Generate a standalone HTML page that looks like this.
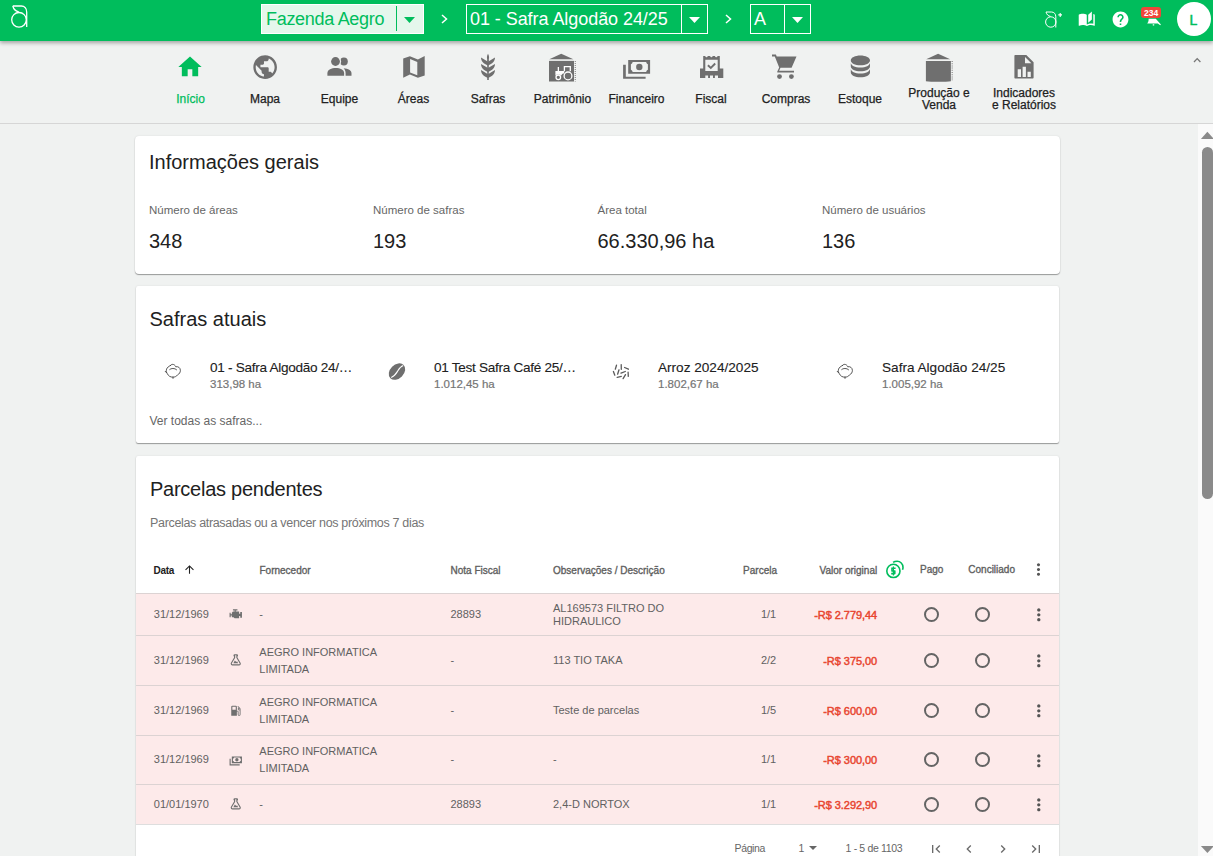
<!DOCTYPE html>
<html><head><meta charset="utf-8">
<style>
*{box-sizing:border-box}
html,body{margin:0;padding:0}
body{width:1213px;height:856px;overflow:hidden;position:relative;background:#f0f2f1;font-family:"Liberation Sans",sans-serif;color:#212121}
.a{position:absolute;white-space:nowrap;line-height:1}
svg{position:absolute;display:block}
#top{position:absolute;left:0;top:0;width:1213px;height:41px;background:#00bd5c;box-shadow:0 2px 4px rgba(0,0,0,.32);z-index:3}
#nav{position:absolute;left:0;top:41px;width:1213px;height:83px;background:#f0f2f1;border-bottom:1px solid #d6d6d6;z-index:2}
.sel{position:absolute;top:4px;height:30px;border:1px solid #fff}
.sel .sep{position:absolute;top:0;bottom:0;width:1px;background:#fff}
.nl{position:absolute;font-size:12px;-webkit-text-stroke:.25px currentColor;color:#212121;text-align:center;line-height:12.5px;white-space:nowrap;transform:translateX(-50%)}
.card{position:absolute;background:#fff;border-radius:4px;box-shadow:0 1px 1px rgba(0,0,0,.35),0 0 2px rgba(0,0,0,.1)}
.th{font-size:10px;color:#5f5f5f;-webkit-text-stroke:.35px #5f5f5f}
.td{font-size:11px;color:#616161}
.tv{font-size:11px;letter-spacing:-.05px;color:#e8452f;-webkit-text-stroke:.45px #e8452f}
.row{position:absolute;left:136px;width:923px;background:#fdeaea;border-top:1px solid #dcd3d3}
.rad{position:absolute;width:15px;height:15px;margin:-.5px 0 0 -.5px;border:2px solid #646464;border-radius:50%}
.pg{font-size:10.5px;color:#666}
</style></head><body>

<div id="top">
  <!-- logo -->
  <svg style="left:0;top:0" width="40" height="40" viewBox="0 0 40 40">
    <path d="M12.8 6 H21.3 C24.6 6 26.7 8.6 26.7 12.2 V26.9" fill="none" stroke="#fff" stroke-width="1.3"/>
    <path d="M12.8 6 C13.6 9.2 15.4 11.2 18.8 11.9" fill="none" stroke="#fff" stroke-width="1.3"/>
    <circle cx="19" cy="19.8" r="7.3" fill="none" stroke="#fff" stroke-width="1.3"/>
  </svg>

  <div class="sel" style="left:261px;width:163px;background:#e5f7ec">
    <div class="a" id="t_faz" style="left:4px;top:5px;font-size:18px;letter-spacing:-.3px;color:#00bd5c">Fazenda Aegro</div>
    <div class="sep" style="left:134px;background:#00bd5c;top:1px;bottom:2px"></div>
    <svg style="left:142px;top:12px" width="11" height="6" viewBox="0 0 11 6"><path d="M0 0H11L5.5 6z" fill="#00bd5c"/></svg>
  </div>
  <svg style="left:441px;top:14px" width="7" height="10" viewBox="0 0 7 10"><path d="M1 1L5.5 5L1 9" fill="none" stroke="#fff" stroke-width="1.5"/></svg>

  <div class="sel" style="left:466px;width:242px">
    <div class="a" id="t_safra" style="left:3px;top:5px;font-size:18px;letter-spacing:-.06px;color:#fff">01 - Safra Algodão 24/25</div>
    <div class="sep" style="left:214px"></div>
    <svg style="left:222px;top:12px" width="11" height="6" viewBox="0 0 11 6"><path d="M0 0H11L5.5 6z" fill="#fff"/></svg>
  </div>
  <svg style="left:725px;top:14px" width="7" height="10" viewBox="0 0 7 10"><path d="M1 1L5.5 5L1 9" fill="none" stroke="#fff" stroke-width="1.5"/></svg>

  <div class="sel" style="left:750px;width:61px">
    <div class="a" id="t_a" style="left:3px;top:5px;font-size:18px;color:#fff">A</div>
    <div class="sep" style="left:33px"></div>
    <svg style="left:41px;top:12px" width="11" height="6" viewBox="0 0 11 6"><path d="M0 0H11L5.5 6z" fill="#fff"/></svg>
  </div>

  <!-- right icons -->
  <svg style="left:1044px;top:10px" width="20" height="19" viewBox="0 0 20 19">
    <path d="M2 2 H7.5 C10 2 11.8 3.8 11.8 6.8 V17.5" fill="none" stroke="#fff" stroke-width="1"/>
    <path d="M2 2 C2.7 4.6 4.2 6 6.6 6.4" fill="none" stroke="#fff" stroke-width="1"/>
    <circle cx="6.8" cy="12" r="5.2" fill="none" stroke="#fff" stroke-width="1"/>
    <path d="M14.3 4.9H18M16.2 2.9V6.9" stroke="#fff" stroke-width="1.1"/>
  </svg>
  <svg style="left:1078.3px;top:10.4px" width="17.5" height="17.5" viewBox="0 0 24 24"><path fill="#fff" d="M19 2L14 6.5V17.5L19 13V2M6.5 5C4.55 5 2.45 5.4 1 6.5V21.16C1 21.41 1.25 21.66 1.5 21.66C1.6 21.66 1.65 21.59 1.75 21.59C3.1 20.94 5.05 20.5 6.5 20.5C8.45 20.5 10.550 20.9 12 22C13.35 21.15 15.8 20.5 17.5 20.5C19.15 20.5 20.85 20.81 22.25 21.56C22.35 21.61 22.4 21.59 22.5 21.59C22.75 21.59 23 21.34 23 21.09V6.5C22.4 6.05 21.75 5.75 21 5.5V19C19.9 18.65 18.7 18.5 17.5 18.5C15.8 18.5 13.35 19.15 12 20V6.5C10.55 5.4 8.450 5 6.5 5Z"/></svg>
  <svg style="left:1111px;top:10px" width="19" height="19" viewBox="0 0 24 24"><path fill="#fff" d="M12 2C6.48 2 2 6.48 2 12s4.48 10 10 10 10-4.48 10-10S17.52 2 12 2zm1 17h-2v-2h2v2zm2.07-7.750l-.9.92C13.45 12.9 13 13.5 13 15h-2v-.5c0-1.1.45-2.1 1.17-2.83l1.24-1.26c.37-.36.59-.86.59-1.41 0-1.1-.9-2-2-2s-2 .9-2 2H8c0-2.21 1.79-4 4-4s4 1.79 4 4c0 .88-.36 1.68-.93 2.25z"/></svg>
  <svg style="left:1136px;top:2px" width="32" height="30" viewBox="0 0 32 30"><path fill="#fff" d="M12.6 16.8H19.8L24.9 22.5L24.2 23.2L21.8 21.4H11.2C11.9 20.6 12.5 19.5 12.6 18Z"/><circle cx="17.5" cy="22.8" r=".9" fill="#fff" opacity=".8"/></svg>
  <div style="position:absolute;left:1141.3px;top:7.3px;width:19.6px;height:11.2px;background:#ef463a;border-radius:3px"></div>
  <div class="a" style="left:1141.3px;top:8.7px;width:19.6px;text-align:center;font-size:8.5px;font-weight:bold;color:#fff">234</div>
  <div style="position:absolute;left:1177px;top:2px;width:34px;height:34px;border-radius:50%;background:#fff"></div>
  <div class="a" style="left:1176.5px;top:12.5px;width:34px;text-align:center;font-size:14px;color:#00bd5c;-webkit-text-stroke:.5px #00bd5c">L</div>
</div>

<div id="nav"></div>
<div id="navitems" style="position:absolute;left:0;top:0;z-index:4">
  <svg style="left:176.4px;top:52.6px" width="28" height="28" viewBox="0 0 24 24"><path fill="#00bd5c" d="M10 20v-6h4v6h5v-8h3L12 3 2 12h3v8z"/></svg>
  <svg style="left:250.8px;top:52.5px" width="28.3" height="28.3" viewBox="0 0 24 24"><path fill="#6f6f6f" d="M12 2C6.48 2 2 6.480 2 12s4.48 10 10 10 10-4.48 10-10S17.52 2 12 2zm-1 17.93c-3.95-.49-7-3.85-7-7.93 0-.62.08-1.21.21-1.79L9 15v1c0 1.1.9 2 2 2v1.93zm6.9-2.54c-.26-.81-1-1.39-1.9-1.39h-1v-3c0-.55-.45-1-1-1H8v-2h2c.55 0 1-.45 1-1V7h2c1.1 0 2-.9 2-2v-.41c2.93 1.19 5 4.06 5 7.41 0 2.08-.8 3.970-2.1 5.39z"/></svg>
  <svg style="left:320px;top:50px" width="38" height="35" viewBox="0 0 38 35">
    <circle cx="23.9" cy="11.5" r="3.9" fill="#6f6f6f"/>
    <circle cx="15.5" cy="11.5" r="5.6" fill="#f0f2f1"/>
    <circle cx="15.5" cy="11.5" r="4.4" fill="#6f6f6f"/>
    <path fill="#6f6f6f" d="M7.4 25.8V23.2C7.4 19.6 11.5 18 15.75 18S24.1 19.6 24.1 23.2V25.8Z"/>
    <path fill="#6f6f6f" d="M25.6 25.8V23.2C25.6 21.2 24.9 19.5 23.6 18.3C28.2 18.6 31.5 20.3 31.5 23.2V25.8Z"/>
  </svg>
  <svg style="left:395px;top:50px" width="40" height="35" viewBox="0 0 40 35">
    <path fill="#6f6f6f" fill-rule="evenodd" d="M8.2 8.6L14.9 6.3L22.9 9.5L29.7 6.1V25.4L22.9 27.8L14.9 24.5L8.2 27.8Z M15.1 9.1L22.3 11.9V25.2L15.1 22.6Z"/>
  </svg>
  <svg style="left:470px;top:50px" width="35" height="35" viewBox="0 0 35 35">
    <g fill="#6f6f6f">
    <path d="M18 3.8C19.3 5.8 19.6 8.6 18 11.8C16.4 8.6 16.7 5.8 18 3.8Z"/>
    <rect x="17.2" y="10" width="1.6" height="20"/>
    <path d="M11 7.6L18 11.8L25 7.6C25 11.2 22.4 13.8 18 15.6C13.6 13.8 11 11.2 11 7.6Z"/>
    <path d="M11 13.9L18 18.1L25 13.9C25 17.5 22.4 20.1 18 21.9C13.6 20.1 11 17.5 11 13.9Z"/>
    <path d="M11 20.1L18 24.3L25 20.1C25 23.7 22.4 26.3 18 28.1C13.6 26.3 11 23.7 11 20.1Z"/>
    </g>
  </svg>
  <svg style="left:544px;top:50px" width="40" height="36" viewBox="0 0 40 36">
    <path fill="#6f6f6f" d="M17.2 3.8L29.4 9.3H5.3Z"/>
    <rect x="5" y="10.9" width="25" height="20.6" fill="#6f6f6f"/>
    <path d="M31.3 11V31.5" stroke="#8d8d8d" stroke-width="1.2" stroke-dasharray="1 1"/>
    <g fill="none" stroke="#fff" stroke-width="1.3">
      <circle cx="24" cy="25.9" r="3.9"/>
      <circle cx="14.3" cy="27.3" r="2.3"/>
      <path d="M20.4 21.3V16.6H26.3V21.3"/>
    </g>
    <path fill="#fff" d="M11.4 21H20.2V23.5H19C18.4 24 17.8 24.5 17.2 25.6C16.6 25 15.6 24.6 14.3 24.6C13 24.6 12 25.1 11.4 25.6Z"/>
    <rect x="13.7" y="17" width="1.3" height="4.2" fill="#fff"/>
  </svg>
  <svg style="left:617px;top:50px" width="40" height="35" viewBox="0 0 40 35">
    <path fill="#6f6f6f" fill-rule="evenodd" d="M11.2 10H33.1V23.7H11.2Z M15.6 12.1H29.2C29.4 13.4 30.3 14.2 30.9 14.3V19.7C30.3 19.8 29.4 20.6 29.2 21.9H15.6C15.4 20.6 14.5 19.8 13.9 19.7V14.3C14.5 14.2 15.4 13.4 15.6 12.1Z"/>
    <circle cx="22.3" cy="17" r="3.2" fill="#6f6f6f"/>
    <path fill="#6f6f6f" d="M6.1 14.8H8.8V26.8H28.6V28.8H6.1Z"/>
  </svg>
  <svg style="left:693px;top:50px" width="38" height="35" viewBox="0 0 38 35">
    <path fill="#6f6f6f" fill-rule="evenodd" d="M10.2 6.1H12.3A1.2 1.2 0 0 0 14.7 6.1H17.2A1.2 1.2 0 0 0 19.6 6.1H22A1.2 1.2 0 0 0 24.5 6.1H26.8V18.6H30.3V28H25V25.6H21.9V28H20V25.6H17V28H15.1V25.6H12.3V28H7V18.6H10.2Z M12.3 9.8V21.1H24.7V9.8Z"/>
    <path d="M14.9 15.2L17.8 17.9L22.2 13.5" fill="none" stroke="#6f6f6f" stroke-width="1.9"/>
  </svg>
  <svg style="left:766px;top:50px" width="36" height="35" viewBox="0 0 36 35">
    <path fill="#6f6f6f" d="M6 4.6H9.9L10.7 6.6H30.5L25.6 17.8H14.5L13.1 20.7H28V22.6H12C11.3 22.6 11 22 11.3 21.4L13.2 17.6L8.8 6.6H6Z"/>
    <circle cx="13.5" cy="26.6" r="2.4" fill="#6f6f6f"/>
    <circle cx="25.4" cy="26.6" r="2.4" fill="#6f6f6f"/>
  </svg>
  <svg style="left:845.6px;top:52.3px" width="28.8" height="28.8" viewBox="0 0 24 24"><path fill="#6f6f6f" d="M12,3C7.58,3 4,4.79 4,7C4,9.21 7.58,11 12,11C16.42,11 20,9.21 20,7C20,4.79 16.42,3 12,3M4,9V12C4,14.21 7.58,16 12,16C16.42,16 20,14.21 20,12V9C20,11.21 16.42,13 12,13C7.58,13 4,11.21 4,9M4,14V17C4,19.21 7.58,21 12,21C16.42,21 20,19.21 20,17V14C20,16.21 16.42,18 12,18C7.58,18 4,16.21 4,14Z"/></svg>
  <svg style="left:918px;top:48px" width="44" height="40" viewBox="0 0 44 40">
    <path fill="#6f6f6f" d="M20.1 5.8L32.2 11.2H8.2Z"/>
    <path fill="#6f6f6f" d="M7.9 12.9H32.9V33.2C28 34 12.8 34 7.9 33.2Z"/>
    <path d="M34.2 13V33" stroke="#8d8d8d" stroke-width="1.3" stroke-dasharray="1 1.2"/>
  </svg>
  <svg style="left:1005px;top:50px" width="38" height="35" viewBox="0 0 38 35">
    <path fill="#6f6f6f" fill-rule="evenodd" d="M10.4 5.1H21.3L28.6 12.3V27.6C28.6 28.2 28.2 28.6 27.6 28.6H10.4C9.8 28.6 9.4 28.2 9.4 27.6V6.1C9.4 5.5 9.8 5.1 10.4 5.1Z M20 7V13.3H26.4Z M12.7 19.2V27H16V19.2Z M17.6 16.8V27H20.9V16.8Z M22.5 21.7V27H25.8V21.7Z"/>
  </svg>
  <svg style="left:1190px;top:55px" width="14" height="10" viewBox="0 0 14 10"><path d="M4 7L7.2 3.6L10.4 7" fill="none" stroke="#777" stroke-width="1.3"/></svg>

  <div class="nl" id="n1" style="left:190.5px;top:92.8px;color:#00bd5c">Início</div>
  <div class="nl" id="n2" style="left:265px;top:92.8px">Mapa</div>
  <div class="nl" id="n3" style="left:339.5px;top:92.8px">Equipe</div>
  <div class="nl" id="n4" style="left:413.5px;top:92.8px">Áreas</div>
  <div class="nl" id="n5" style="left:488px;top:92.8px">Safras</div>
  <div class="nl" id="n6" style="left:562.5px;top:92.8px">Patrimônio</div>
  <div class="nl" id="n7" style="left:636.5px;top:92.8px">Financeiro</div>
  <div class="nl" id="n8" style="left:711px;top:92.8px">Fiscal</div>
  <div class="nl" id="n9" style="left:786px;top:92.8px">Compras</div>
  <div class="nl" id="n10" style="left:860px;top:92.8px">Estoque</div>
  <div class="nl" id="n11" style="left:939px;top:86.6px">Produção e<br>Venda</div>
  <div class="nl" id="n12" style="left:1024px;top:86.6px">Indicadores<br>e Relatórios</div>
</div>

<!--CARDS-->
<div class="card" style="left:135px;top:136px;width:925px;height:138px"></div>
<div class="a" id="c1t" style="left:149px;top:152.1px;font-size:20px;color:#212121">Informações gerais</div>
<div class="a" id="c1l0" style="left:149px;top:205.1px;font-size:11.5px;color:#666">Número de áreas</div>
<div class="a" id="c1v0" style="left:149px;top:231.1px;font-size:20px;color:#212121">348</div>
<div class="a" id="c1l1" style="left:373px;top:205.1px;font-size:11.5px;color:#666">Número de safras</div>
<div class="a" id="c1v1" style="left:373px;top:231.1px;font-size:20px;color:#212121">193</div>
<div class="a" id="c1l2" style="left:597.5px;top:205.1px;font-size:11.5px;color:#666">Área total</div>
<div class="a" id="c1v2" style="left:597.5px;top:231.1px;font-size:20px;color:#212121">66.330,96 ha</div>
<div class="a" id="c1l3" style="left:822px;top:205.1px;font-size:11.5px;color:#666">Número de usuários</div>
<div class="a" id="c1v3" style="left:822px;top:231.1px;font-size:20px;color:#212121">136</div>
<div class="card" style="left:136px;top:286px;width:923px;height:157px;border-radius:2px"></div>
<div class="a" id="c2t" style="left:149.5px;top:308.7px;font-size:20px;color:#212121">Safras atuais</div>
<div class="a" id="c2n0" style="left:210px;top:360.5px;font-size:13.6px;color:#212121;-webkit-text-stroke:.1px #212121;letter-spacing:-.3px">01 - Safra Algodão 24/…</div>
<div class="a" id="c2a0" style="left:210px;top:378.7px;font-size:11.5px;color:#757575;-webkit-text-stroke:.2px #757575">313,98 ha</div>
<svg style="left:160px;top:358px" width="26" height="26" viewBox="0 0 26 26"><g fill="none" stroke="#3a3a3a" stroke-width=".85" stroke-linecap="round"><path d="M10.3 7.6C11 5.9 14.4 5.5 15.8 8.8C18 8.2 20.3 9.6 20.4 12.4C20.4 14.4 19.3 16 17.6 16.8C16.5 18.5 14.6 19.2 13 19.1C10.5 19.3 8.4 18 7.4 15.8C6.4 14.6 6 12.6 6.6 11.1C7.1 9.5 8.7 8.4 10.3 7.6Z"/><path d="M13 19.1V20.4M9.7 11.5C11 10.2 14.8 9.9 16.6 11.8M5.2 13.3L6.5 14.7"/></g></svg>
<div class="a" id="c2n1" style="left:434px;top:360.5px;font-size:13.6px;color:#212121;-webkit-text-stroke:.1px #212121;letter-spacing:-.3px">01 Test Safra Café 25/…</div>
<div class="a" id="c2a1" style="left:434px;top:378.7px;font-size:11.5px;color:#757575;-webkit-text-stroke:.2px #757575">1.012,45 ha</div>
<svg style="left:384px;top:358px" width="26" height="26" viewBox="0 0 26 26"><ellipse cx="13" cy="13.6" rx="9.4" ry="6.9" transform="rotate(-45 13 13.6)" fill="#6f6f6f"/><path d="M19.2 7.6C16.2 8.6 14.8 11.2 13.5 13.4C12.2 15.6 10.4 18.2 7.2 19.4" fill="none" stroke="#fff" stroke-width="1.1"/></svg>
<div class="a" id="c2n2" style="left:658px;top:360.5px;font-size:13.6px;color:#212121;-webkit-text-stroke:.1px #212121;">Arroz 2024/2025</div>
<div class="a" id="c2a2" style="left:658px;top:378.7px;font-size:11.5px;color:#757575;-webkit-text-stroke:.2px #757575">1.802,67 ha</div>
<svg style="left:608px;top:358px" width="26" height="26" viewBox="0 0 26 26"><g fill="none" stroke="#5a5a5a" stroke-width="1.3" stroke-linecap="round"><path d="M8.5 7.2L7.3 11.2M13.2 6.6L13.3 11.3M16.6 9.5L20.4 11.2M11 11.8L9.6 16.2M5.4 13.5L6.8 17.2M13 15.2L17.3 13.5M20.1 14.2L20.3 18.4M9.2 19.3L13.3 18.4M15.1 20.6L17.5 16.6"/></g></svg>
<div class="a" id="c2n3" style="left:882px;top:360.5px;font-size:13.6px;color:#212121;-webkit-text-stroke:.1px #212121;">Safra Algodão 24/25</div>
<div class="a" id="c2a3" style="left:882px;top:378.7px;font-size:11.5px;color:#757575;-webkit-text-stroke:.2px #757575">1.005,92 ha</div>
<svg style="left:832px;top:358px" width="26" height="26" viewBox="0 0 26 26"><g fill="none" stroke="#3a3a3a" stroke-width=".85" stroke-linecap="round"><path d="M10.3 7.6C11 5.9 14.4 5.5 15.8 8.8C18 8.2 20.3 9.6 20.4 12.4C20.4 14.4 19.3 16 17.6 16.8C16.5 18.5 14.6 19.2 13 19.1C10.5 19.3 8.4 18 7.4 15.8C6.4 14.6 6 12.6 6.6 11.1C7.1 9.5 8.7 8.4 10.3 7.6Z"/><path d="M13 19.1V20.4M9.7 11.5C11 10.2 14.8 9.9 16.6 11.8M5.2 13.3L6.5 14.7"/></g></svg>
<div class="a" id="c2v" style="left:149.5px;top:414.6px;font-size:12px;color:#666">Ver todas as safras...</div>
<div class="card" style="left:136px;top:456px;width:923px;height:430px;border-radius:2px"></div>
<div class="a" id="c3t" style="left:150px;top:479.1px;font-size:20px;letter-spacing:-.25px;color:#212121">Parcelas pendentes</div>
<div class="a" id="c3s" style="left:150px;top:516.8px;font-size:12.5px;letter-spacing:-.33px;color:#757575">Parcelas atrasadas ou a vencer nos próximos 7 dias</div>
<div class="a th" id="h_data" style="left:153.6px;top:565.5px;font-weight:bold;font-size:10px;letter-spacing:-.3px;color:#212121;-webkit-text-stroke:0">Data</div>
<svg style="left:183px;top:563px" width="13" height="13" viewBox="0 0 24 24"><path fill="#212121" d="M4 12l1.41 1.41L11 7.83V20h2V7.83l5.58 5.59L20 12l-8-8-8 8z"/></svg>
<div class="a th" id="h_forn" style="left:259.5px;top:565.5px;">Fornecedor</div>
<div class="a th" id="h_nf" style="left:450.5px;top:565.5px;">Nota Fiscal</div>
<div class="a th" id="h_obs" style="left:553px;top:565.5px;">Observações / Descrição</div>
<div class="a th" id="h_parc" style="left:577px;width:200px;text-align:right;top:565.5px;">Parcela</div>
<div class="a th" id="h_val" style="left:677.2px;width:200px;text-align:right;top:565.5px;">Valor original</div>
<svg style="left:880px;top:555px" width="30" height="28" viewBox="0 0 30 28"><g fill="none" stroke="#00bd5c" stroke-width="1.6"><circle cx="13.4" cy="15.9" r="6.6"/><path d="M13.1 7.4C14.2 6.6 15.7 6.3 17.2 6.3C20.3 6.3 23 8.9 23 12.2C23 13.2 22.8 14 22.5 14.7"/></g><path fill="#00bd5c" d="M11.2 12.5H15.6V14.1H12.8V15.2H14.7C15.4 15.2 15.6 15.6 15.6 16.2V18.6C15.6 19.1 15.3 19.4 14.8 19.4H11.2V17.8H14V16.8H12C11.4 16.8 11.2 16.4 11.2 15.8Z"/><rect x="12.8" y="11.5" width="1.2" height="9" fill="#00bd5c"/></svg>
<div class="a th" id="h_pago" style="left:920px;top:564.5px">Pago</div>
<div class="a th" id="h_conc" style="left:968.3px;top:564.5px">Conciliado</div>
<svg style="left:1029px;top:560px" width="19" height="19" viewBox="0 0 24 24"><path fill="#555" d="M12 8c1.1 0 2-.9 2-2s-.9-2-2-2-2 .9-2 2 .9 2 2 2zm0 2c-1.1 0-2 .9-2 2s.9 2 2 2 2-.9 2-2-.9-2-2-2zm0 6c-1.1 0-2 .9-2 2s.9 2 2 2 2-.9 2-2-.9-2-2-2z"/></svg>
<div class="row" style="top:593px;height:42px"></div>
<div class="a td" style="left:153.8px;top:608.7px">31/12/1969</div>
<svg style="left:228.7px;top:607.0px" width="13.5" height="13.5" viewBox="0 0 24 24"><path fill="#6f6f6f" d="M7,4V6H10V8H7L5,10V13H3V10H1V18H3V15H5V18H8L10,20H18V16H20V19H23V9H20V12H18V8H12V6H15V4H7Z"/></svg>
<div class="a td" style="left:259.3px;top:608.7px">-</div>
<div class="a td" style="left:450.5px;top:608.7px">28893</div>
<div class="a td" style="left:553px;top:603.1px">AL169573 FILTRO DO</div>
<div class="a td" style="left:553px;top:615.9px">HIDRAULICO</div>
<div class="a td" style="left:576.2px;width:200px;text-align:right;top:608.7px">1/1</div>
<div class="a tv" style="left:677.2px;width:200px;text-align:right;top:609.9px">-R$ 2.779,44</div>
<div class="rad" style="left:924.5px;top:607.0px"></div>
<div class="rad" style="left:975.5px;top:607.0px"></div>
<svg style="left:1028.6px;top:605.0px" width="19.6" height="19.6" viewBox="0 0 24 24"><path fill="#555" d="M12 8c1.1 0 2-.9 2-2s-.9-2-2-2-2 .9-2 2 .9 2 2 2zm0 2c-1.1 0-2 .9-2 2s.9 2 2 2 2-.9 2-2-.9-2-2-2zm0 6c-1.1 0-2 .9-2 2s.9 2 2 2 2-.9 2-2-.9-2-2-2z"/></svg>
<div class="row" style="top:635px;height:50px"></div>
<div class="a td" style="left:153.8px;top:654.7px">31/12/1969</div>
<svg style="left:228.7px;top:653.0px" width="13.5" height="13.5" viewBox="0 0 24 24"><path fill="#6f6f6f" d="M5,19A1,1 0 0,0 6,20H18A1,1 0 0,0 19,19C19,18.79 18.93,18.59 18.82,18.43L13,8.35V4H11V8.35L5.18,18.43C5.07,18.59 5,18.79 5,19M6,22A3,3 0 0,1 3,19C3,18.4 3.18,17.84 3.5,17.37L9,7.81V6A1,1 0 0,1 8,5V4A2,2 0 0,1 10,2H14A2,2 0 0,1 16,4V5A1,1 0 0,1 15,6V7.81L20.5,17.37C20.82,17.84 21,18.4 21,19A3,3 0 0,1 18,22H6M13,16L14.34,14.66L16.27,18H7.73L10.39,13.39L13,16Z"/></svg>
<div class="a td" style="left:259.3px;top:646.8px">AEGRO INFORMATICA</div>
<div class="a td" style="left:259.3px;top:663.6px">LIMITADA</div>
<div class="a td" style="left:450.5px;top:654.7px">-</div>
<div class="a td" style="left:553px;top:654.7px">113 TIO TAKA</div>
<div class="a td" style="left:576.2px;width:200px;text-align:right;top:654.7px">2/2</div>
<div class="a tv" style="left:677.2px;width:200px;text-align:right;top:655.9px">-R$ 375,00</div>
<div class="rad" style="left:924.5px;top:653.0px"></div>
<div class="rad" style="left:975.5px;top:653.0px"></div>
<svg style="left:1028.6px;top:651.0px" width="19.6" height="19.6" viewBox="0 0 24 24"><path fill="#555" d="M12 8c1.1 0 2-.9 2-2s-.9-2-2-2-2 .9-2 2 .9 2 2 2zm0 2c-1.1 0-2 .9-2 2s.9 2 2 2 2-.9 2-2-.9-2-2-2zm0 6c-1.1 0-2 .9-2 2s.9 2 2 2 2-.9 2-2-.9-2-2-2z"/></svg>
<div class="row" style="top:685px;height:50px"></div>
<div class="a td" style="left:153.8px;top:704.7px">31/12/1969</div>
<svg style="left:228.7px;top:704.0px" width="13.5" height="13.5" viewBox="0 0 24 24"><path fill="#6f6f6f" d="M18,10A1,1 0 0,1 17,9A1,1 0 0,1 18,8A1,1 0 0,1 19,9A1,1 0 0,1 18,10M12,10H6V5H12M19.77,7.23L19.78,7.22L16.06,3.5L15,4.56L17.11,6.67C16.17,7.03 15.5,7.93 15.5,9A2.5,2.5 0 0,0 18,11.5C18.36,11.5 18.69,11.42 19,11.29V18.5A1,1 0 0,1 18,19.5A1,1 0 0,1 17,18.5V14A2,2 0 0,0 15,12H14V5A2,2 0 0,0 12,3H6A2,2 0 0,0 4,5V21H14V13.5H15.5V18.5A2.5,2.5 0 0,0 18,21A2.5,2.5 0 0,0 20.5,18.5V9C20.5,8.31 20.22,7.68 19.77,7.23Z"/></svg>
<div class="a td" style="left:259.3px;top:696.8px">AEGRO INFORMATICA</div>
<div class="a td" style="left:259.3px;top:713.6px">LIMITADA</div>
<div class="a td" style="left:450.5px;top:704.7px">-</div>
<div class="a td" style="left:553px;top:704.7px">Teste de parcelas</div>
<div class="a td" style="left:576.2px;width:200px;text-align:right;top:704.7px">1/5</div>
<div class="a tv" style="left:677.2px;width:200px;text-align:right;top:705.9px">-R$ 600,00</div>
<div class="rad" style="left:924.5px;top:703.0px"></div>
<div class="rad" style="left:975.5px;top:703.0px"></div>
<svg style="left:1028.6px;top:701.0px" width="19.6" height="19.6" viewBox="0 0 24 24"><path fill="#555" d="M12 8c1.1 0 2-.9 2-2s-.9-2-2-2-2 .9-2 2 .9 2 2 2zm0 2c-1.1 0-2 .9-2 2s.9 2 2 2 2-.9 2-2-.9-2-2-2zm0 6c-1.1 0-2 .9-2 2s.9 2 2 2 2-.9 2-2-.9-2-2-2z"/></svg>
<div class="row" style="top:735px;height:49px"></div>
<div class="a td" style="left:153.8px;top:754.2px">31/12/1969</div>
<svg style="left:228.7px;top:752.5px" width="13.5" height="13.5" viewBox="0 0 24 24"><path fill="#6f6f6f" d="M5,6H23V18H5V6M14,9A3,3 0 0,1 17,12A3,3 0 0,1 14,15A3,3 0 0,1 11,12A3,3 0 0,1 14,9M9,8A2,2 0 0,1 7,10V14A2,2 0 0,1 9,16H19A2,2 0 0,1 21,14V10A2,2 0 0,1 19,8H9M1,10H3V20H19V22H1V10Z"/></svg>
<div class="a td" style="left:259.3px;top:746.3px">AEGRO INFORMATICA</div>
<div class="a td" style="left:259.3px;top:763.1px">LIMITADA</div>
<div class="a td" style="left:450.5px;top:754.2px">-</div>
<div class="a td" style="left:553px;top:754.2px">-</div>
<div class="a td" style="left:576.2px;width:200px;text-align:right;top:754.2px">1/1</div>
<div class="a tv" style="left:677.2px;width:200px;text-align:right;top:755.4px">-R$ 300,00</div>
<div class="rad" style="left:924.5px;top:752.5px"></div>
<div class="rad" style="left:975.5px;top:752.5px"></div>
<svg style="left:1028.6px;top:750.5px" width="19.6" height="19.6" viewBox="0 0 24 24"><path fill="#555" d="M12 8c1.1 0 2-.9 2-2s-.9-2-2-2-2 .9-2 2 .9 2 2 2zm0 2c-1.1 0-2 .9-2 2s.9 2 2 2 2-.9 2-2-.9-2-2-2zm0 6c-1.1 0-2 .9-2 2s.9 2 2 2 2-.9 2-2-.9-2-2-2z"/></svg>
<div class="row" style="top:784px;height:40px"></div>
<div class="a td" style="left:153.8px;top:798.7px">01/01/1970</div>
<svg style="left:228.7px;top:797.0px" width="13.5" height="13.5" viewBox="0 0 24 24"><path fill="#6f6f6f" d="M5,19A1,1 0 0,0 6,20H18A1,1 0 0,0 19,19C19,18.79 18.93,18.59 18.82,18.43L13,8.35V4H11V8.35L5.18,18.43C5.07,18.59 5,18.79 5,19M6,22A3,3 0 0,1 3,19C3,18.4 3.18,17.84 3.5,17.37L9,7.81V6A1,1 0 0,1 8,5V4A2,2 0 0,1 10,2H14A2,2 0 0,1 16,4V5A1,1 0 0,1 15,6V7.81L20.5,17.37C20.82,17.84 21,18.4 21,19A3,3 0 0,1 18,22H6M13,16L14.34,14.66L16.27,18H7.73L10.39,13.39L13,16Z"/></svg>
<div class="a td" style="left:259.3px;top:798.7px">-</div>
<div class="a td" style="left:450.5px;top:798.7px">28893</div>
<div class="a td" style="left:553px;top:798.7px">2,4-D NORTOX</div>
<div class="a td" style="left:576.2px;width:200px;text-align:right;top:798.7px">1/1</div>
<div class="a tv" style="left:677.2px;width:200px;text-align:right;top:799.9px">-R$ 3.292,90</div>
<div class="rad" style="left:924.5px;top:797.0px"></div>
<div class="rad" style="left:975.5px;top:797.0px"></div>
<svg style="left:1028.6px;top:795.0px" width="19.6" height="19.6" viewBox="0 0 24 24"><path fill="#555" d="M12 8c1.1 0 2-.9 2-2s-.9-2-2-2-2 .9-2 2 .9 2 2 2zm0 2c-1.1 0-2 .9-2 2s.9 2 2 2 2-.9 2-2-.9-2-2-2zm0 6c-1.1 0-2 .9-2 2s.9 2 2 2 2-.9 2-2-.9-2-2-2z"/></svg>
<div style="position:absolute;left:136px;top:824px;width:923px;height:1px;background:#dedede"></div>
<div class="a pg" style="left:734.6px;top:842.5px;letter-spacing:-.4px">Página</div>
<div class="a pg" style="left:798.5px;top:842.5px">1</div>
<svg style="left:809px;top:846px" width="8" height="4" viewBox="0 0 8 4"><path d="M0 0H8L4 4z" fill="#666"/></svg>
<div class="a pg" style="left:845.6px;top:842.5px;letter-spacing:-.35px">1 - 5 de 1103</div>
<svg style="left:927.8px;top:840.6px" width="16" height="16" viewBox="0 0 24 24"><path fill="#6a6a6a" d="M18.41 16.59L13.82 12l4.59-4.59L17 6l-6 6 6 6zM6 6h2v12H6z"/></svg>
<svg style="left:960.7px;top:840.6px" width="16" height="16" viewBox="0 0 24 24"><path fill="#6a6a6a" d="M15.41 7.41L14 6l-6 6 6 6 1.41-1.410L10.83 12z"/></svg>
<svg style="left:994.7px;top:840.6px" width="16" height="16" viewBox="0 0 24 24"><path fill="#6a6a6a" d="M10 6L8.59 7.41 13.17 12l-4.58 4.59L10 18l6-6z"/></svg>
<svg style="left:1028.3px;top:840.6px" width="16" height="16" viewBox="0 0 24 24"><path fill="#6a6a6a" d="M5.59 7.41L10.18 12l-4.59 4.59L7 18l6-6-6-6zM16 6h2v12h-2z"/></svg>
<div style="position:absolute;left:1198px;top:124px;width:15px;height:732px;background:#fafafa;z-index:1"></div>
<svg style="left:1198px;top:124px;z-index:1" width="15" height="20" viewBox="0 0 15 20"><path d="M2.9 14.9H15.9L9.4 7.8Z" fill="#8a8a8a"/></svg>
<div style="position:absolute;left:1202px;top:147px;width:11px;height:352px;background:#8a8a8a;border-radius:5.5px;z-index:1"></div>
<svg style="left:1198px;top:840px;z-index:1" width="15" height="16" viewBox="0 0 15 16"><path d="M2.9 6.1H15.9L9.4 13Z" fill="#8a8a8a"/></svg>
</body></html>
